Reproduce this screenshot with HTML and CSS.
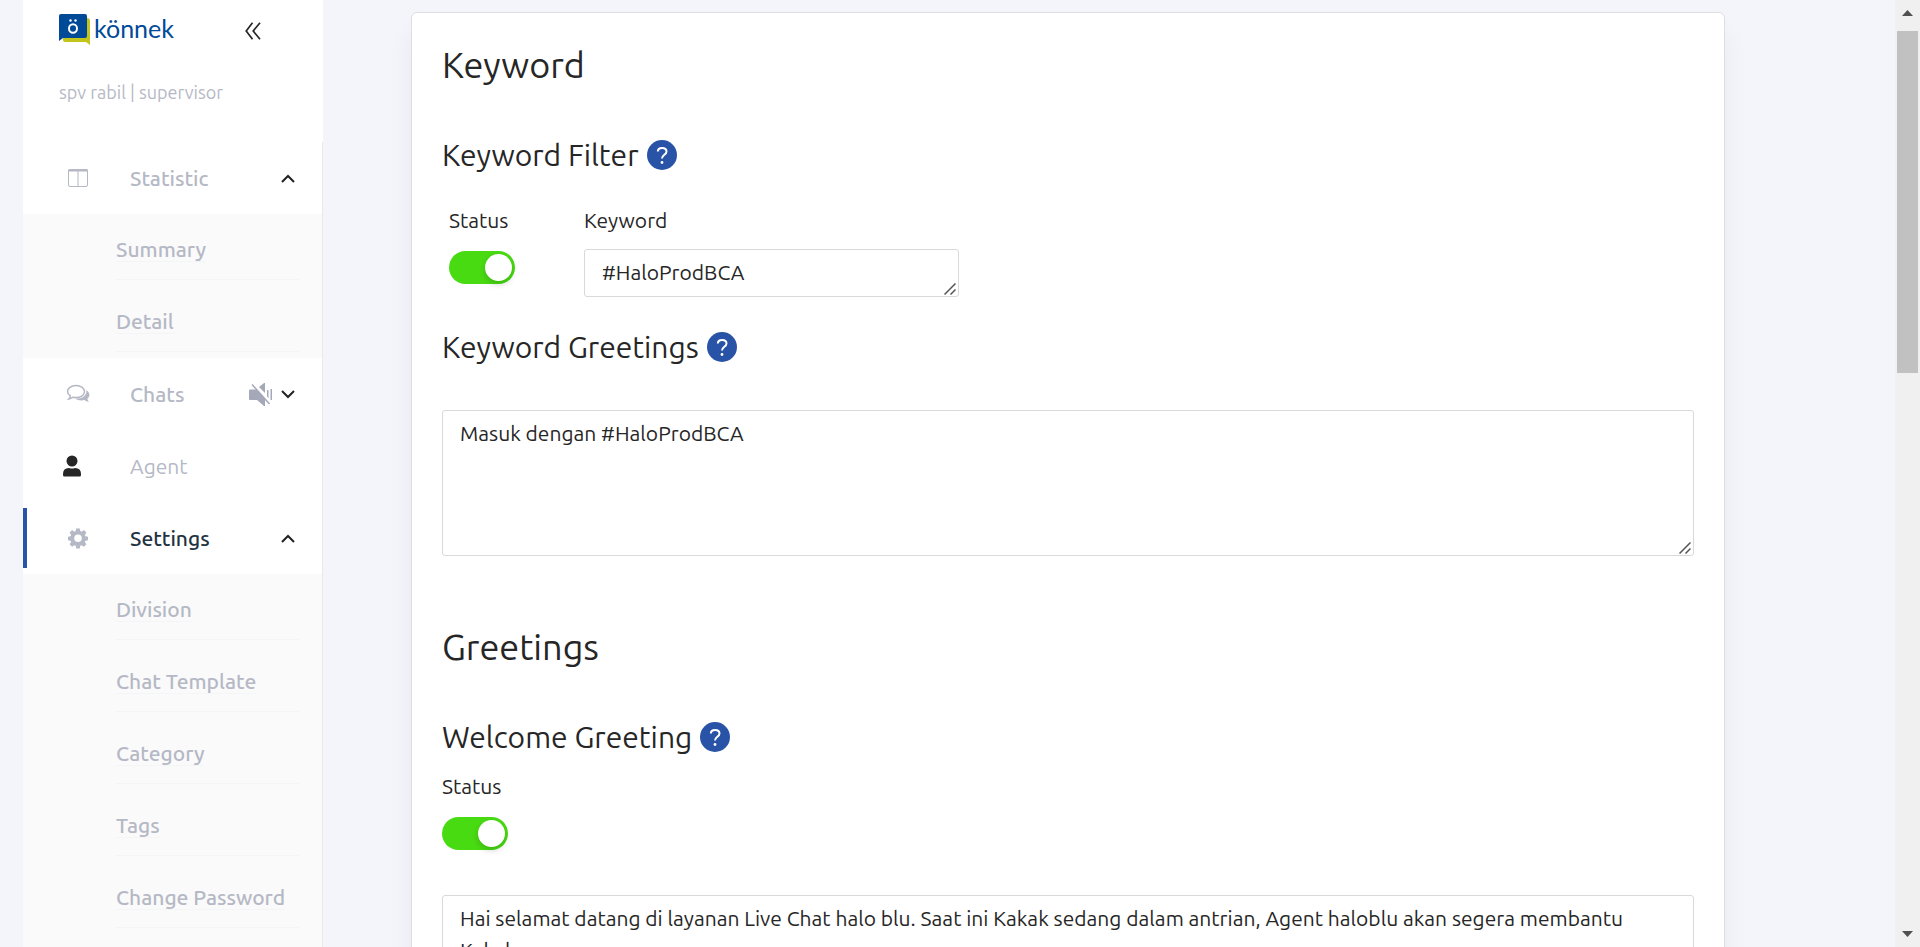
FILE: index.html
```html
<!DOCTYPE html>
<html lang="id">
<head>
<meta charset="utf-8">
<meta name="viewport" content="width=device-width, initial-scale=1">
<title>könnek - Settings</title>
<link rel="stylesheet" href="styles.css">
</head>
<body>
<div class="app">
  <aside class="sidebar">
    <header class="brand">
      <div class="brand-row">
        <a class="logo" href="#">
          <svg class="logo-mark" viewBox="0 0 32 31" aria-hidden="true">
            <path d="M6 4h22q3 0 3 3v24l-4-3H6q-2 0-2-2z" fill="#c3c51b"/>
            <path d="M2 0h24q2 0 2 2v20q0 2-2 2H4l-4 3V2q0-2 2-2z" fill="#004a98"/>
            <ellipse cx="14" cy="14.500" rx="4" ry="4.300" fill="none" stroke="#fff" stroke-width="2"/>
            <circle cx="11.500" cy="6.500" r="1.200" fill="#fff"/><circle cx="16.500" cy="6.500" r="1.200" fill="#fff"/>
          </svg>
          <span class="logo-text">könnek</span>
        </a>
        <button class="collapse" type="button" aria-label="Collapse menu">
          <svg viewBox="0 0 16 18"><path d="M7.500 .7 1.200 9l6.300 8.300M15 .7 8.200 9 15 17.300" fill="none" stroke="#262626" stroke-width="1.700"/></svg>
        </button>
      </div>
      <p class="user">spv rabil | supervisor</p>
    </header>
    <nav class="menu">
      <a class="item" href="#">
        <svg class="icon" viewBox="0 0 24 24"><rect x="2.500" y="3.500" width="19" height="17" rx="1.500" fill="none" stroke="#b5b8c5"/><path d="M2 3.500h20v2H2zM11.500 4h1v16h-1z" fill="#b5b8c5"/></svg>
        <span class="label">Statistic</span>
        <svg class="arrow" viewBox="0 0 14 9"><path d="M1 8l6-6 6 6" fill="none" stroke="#222" stroke-width="2"/></svg>
      </a>
      <div class="submenu">
        <a class="sub" href="#"><span>Summary</span></a>
        <a class="sub" href="#"><span>Detail</span></a>
      </div>
      <a class="item" href="#">
        <svg class="icon" viewBox="0 0 24 24"><path d="M10 3.600c5 0 8.500 2.600 8.500 6s-3.500 6-8.500 6q-1.500 0-3-.4-1.500 1.200-4 1.700 1.200-1.200 1.300-3C2.500 12.700 1.500 11.300 1.500 9.600c0-3.400 3.500-6 8.500-6z" fill="none" stroke="#b5b8c5" stroke-width="1.500"/><path d="M20.300 8q3.200 1.900 3.200 4.800 0 2.400-2.100 4 .2 1.700 1.500 3.200-2.800-.4-4.500-1.900-6 1-9.400-1.600 9.400.5 11.200-5.500.4-1.500.1-3z" fill="#b5b8c5"/></svg>
        <span class="label">Chats</span>
        <svg class="mute" viewBox="0 0 24 24"><path d="M1 7.500h6L16 16.500V24h-1l-7-6H1q-1 0-1-1V8.500q0-1 1-1zM15 1h1v10l-6-6zM18 8h1.500v8L18 14.500zM21.500 7H23v11h-1.500z" fill="#a5a8b8"/><path d="M3 2.500 20.500 22" stroke="#a5a8b8" stroke-width="1.500"/></svg>
        <svg class="arrow" viewBox="0 0 14 9"><path d="M1 1l6 6 6-6" fill="none" stroke="#222" stroke-width="2"/></svg>
      </a>
      <a class="item agent" href="#">
        <svg class="icon" viewBox="0 0 24 24"><circle cx="12" cy="7" r="5.500" fill="#262626"/><path d="M3 20q0-6 6-6 3 1 6 0 6 0 6 6v1q0 1.500-1.500 1.500h-15Q3 22.500 3 21z" fill="#262626"/></svg>
        <span class="label">Agent</span>
      </a>
      <a class="item active" href="#">
        <svg class="icon" viewBox="0 0 24 24"><path fill="#b5b8c5" fill-rule="evenodd" d="M10.200 2.500h3.600l.5 2.600 1.300.6 2.300-1.600 2.500 2.500-1.500 2.300.5 1.400 2.600.4v3.500l-2.600.5-.6 1.300 1.600 2.300-2.500 2.500-2.300-1.500-1.300.5-.5 2.700h-3.600l-.5-2.700-1.300-.5-2.300 1.500-2.500-2.500 1.600-2.300-.6-1.300-2.600-.5v-3.500l2.600-.4.500-1.400-1.500-2.300 2.500-2.500 2.300 1.600 1.300-.6zM12 8.400a3.800 3.800 0 1 0 0 7.600 3.800 3.800 0 0 0 0-7.600z"/></svg>
        <span class="label">Settings</span>
        <svg class="arrow" viewBox="0 0 14 9"><path d="M1 8l6-6 6 6" fill="none" stroke="#222" stroke-width="2"/></svg>
      </a>
      <div class="submenu">
        <a class="sub" href="#"><span>Division</span></a>
        <a class="sub" href="#"><span>Chat Template</span></a>
        <a class="sub" href="#"><span>Category</span></a>
        <a class="sub" href="#"><span>Tags</span></a>
        <a class="sub" href="#"><span>Change Password</span></a>
      </div>
    </nav>
  </aside>

  <main class="content">
    <section class="card">
      <h1 class="title">Keyword</h1>

      <h2 class="subtitle">Keyword Filter
        <button class="help" type="button" aria-label="Help"><svg viewBox="0 0 30 30"><path d="M10.800 11.500c.2-4.800 8.700-4.600 8.700 0 0 3.200-4.500 3.500-4.500 7" fill="none" stroke="#fff" stroke-width="2"/><circle cx="15" cy="22.500" r="1.400" fill="#fff"/></svg></button>
      </h2>
      <div class="filter">
        <div class="field">
          <label for="filter-status">Status</label>
          <input class="switch" id="filter-status" type="checkbox" role="switch" checked>
        </div>
        <div class="field field-keyword">
          <label for="keyword">Keyword</label>
          <div class="box"><textarea class="area one-line" id="keyword" rows="1">#HaloProdBCA</textarea><svg class="grip" viewBox="0 0 12 12"><path d="M.5 11.500l11-11M6.500 11.500l5-5" stroke="#555" stroke-width="1.500"/></svg></div>
        </div>
      </div>

      <h2 class="subtitle">Keyword Greetings
        <button class="help" type="button" aria-label="Help"><svg viewBox="0 0 30 30"><path d="M10.800 11.500c.2-4.800 8.700-4.600 8.700 0 0 3.200-4.500 3.500-4.500 7" fill="none" stroke="#fff" stroke-width="2"/><circle cx="15" cy="22.500" r="1.400" fill="#fff"/></svg></button>
      </h2>
      <div class="box message"><textarea class="area" rows="4" aria-label="Keyword Greetings">Masuk dengan #HaloProdBCA</textarea><svg class="grip" viewBox="0 0 12 12"><path d="M.5 11.500l11-11M6.500 11.500l5-5" stroke="#555" stroke-width="1.500"/></svg></div>

      <h1 class="title second">Greetings</h1>

      <h2 class="subtitle">Welcome Greeting
        <button class="help" type="button" aria-label="Help"><svg viewBox="0 0 30 30"><path d="M10.800 11.500c.2-4.800 8.700-4.600 8.700 0 0 3.200-4.500 3.500-4.500 7" fill="none" stroke="#fff" stroke-width="2"/><circle cx="15" cy="22.500" r="1.400" fill="#fff"/></svg></button>
      </h2>
      <div class="field welcome">
        <label for="welcome-status">Status</label>
        <input class="switch" id="welcome-status" type="checkbox" role="switch" checked>
      </div>
      <div class="box message"><textarea class="area" rows="4" aria-label="Welcome Greeting">Hai selamat datang di layanan Live Chat halo blu. Saat ini Kakak sedang dalam antrian, Agent haloblu akan segera membantu Kakak.</textarea></div>
    </section>
  </main>

  <div class="scrollbar" aria-hidden="true">
    <svg class="scroll-arrow" viewBox="0 0 11 6"><path d="M0 6l5.500-6L11 6z" fill="#505050"/></svg>
    <div class="track"><div class="thumb"></div></div>
    <svg class="scroll-arrow" viewBox="0 0 11 6"><path d="M0 0l5.500 6L11 0z" fill="#505050"/></svg>
  </div>
</div>
</body>
</html>
```
FILE: styles.css
```css
* { box-sizing: border-box; }

body {
  margin: 0;
  background: #f4f5fa;
  color: #262626;
  font-family: Ubuntu, "Noto Sans", sans-serif;
  font-size: 21px;
  line-height: 32px;
}

a { color: inherit; text-decoration: none; }
button { padding: 0; border: 0; background: none; font: inherit; cursor: pointer; }
svg { display: block; }

.app {
  display: flex;
  height: 100vh;
  padding-left: 23px;
  overflow: hidden;
}

/* Sidebar */
.sidebar {
  display: flex;
  flex: 0 0 300px;
  flex-direction: column;
  color: #b5b8c5;
}

.brand {
  flex: none;
  height: 142px;
  padding: 14px 62px 0 36px;
  background: #fff;
}
.brand-row {
  display: flex;
  align-items: flex-start;
  justify-content: space-between;
  height: 32px;
}
.logo { display: flex; gap: 3px; color: #004a98; }
.logo-mark { width: 32px; height: 31px; }
.logo-text { font-family: Lato, sans-serif; font-size: 25px; line-height: 28px; }
.collapse { padding-top: 8px; }
.collapse svg { width: 16px; height: 18px; }
.user { margin: 32px 0 0; font-size: 18px; line-height: 28px; }

.menu {
  display: flex;
  flex: 1;
  flex-direction: column;
  border-right: 1px solid #e8e8ee;
  background: #fff;
}
.item {
  display: flex;
  flex: none;
  align-items: center;
  height: 72px;
  padding: 0 27px 0 43px;
  font-weight: 500;
}
.icon { flex: none; width: 24px; height: 24px; margin-right: 40px; }
.label { flex: 1; }
.arrow { width: 14px; height: 9px; }
.mute { width: 24px; height: 24px; margin-right: 8px; }
.agent { padding-left: 37px; font-weight: 400; }
.agent .icon { margin-right: 46px; }
.active { color: #22333f; }
.active::before {
  content: "";
  width: 4px;
  height: 60px;
  margin: 0 39px 0 -43px;
  background: #2953a6;
}

.submenu { padding-left: 93px; background: #fafafa; }
.submenu:last-child { flex: 1; }
.submenu::after { content: ""; display: table; }
.sub {
  display: block;
  height: 66px;
  margin: 0 23px 6px 0;
  padding-top: 19px;
  border-bottom: 1px solid #f4f5f7;
  font-weight: 500;
}
.sub span { border-bottom: 1px solid #f4f5f7; }

/* Settings form */
.content { flex: 1; min-width: 0; padding: 12px 170px 0 88px; }
.card {
  padding: 30px;
  border: 1px solid #dedee2;
  border-radius: 6px;
  background: #fff;
  box-shadow: 0 20px 27px rgba(0, 0, 0, 0.05);
}
.title { margin: 0 0 44px; font-size: 36px; font-weight: 400; line-height: 44px; }
.title.second { margin-top: 69px; }
.subtitle {
  display: flex;
  align-items: center;
  gap: 8px;
  margin: 0;
  font-size: 30px;
  font-weight: 400;
  line-height: 48px;
}
.help { width: 30px; height: 30px; border-radius: 50%; background: #2953a6; }

.field { display: flex; flex-direction: column; align-items: flex-start; }
.filter { display: flex; gap: 69px; margin: 25px 0 26px; padding-left: 7px; }
.field-keyword label { margin-bottom: 13px; }
.welcome { margin-top: 9px; }

.switch {
  appearance: none;
  width: 66px;
  height: 33px;
  margin: 15px 0 0;
  padding: 3px;
  border-radius: 17px;
  background: #49db12;
  cursor: pointer;
}
.switch::before {
  content: "";
  display: block;
  width: 27px;
  height: 27px;
  margin-left: auto;
  border-radius: 50%;
  background: #fff;
  box-shadow: 0 3px 6px rgba(0, 35, 11, 0.2);
}
.switch:not(:checked) { background: #bfbfbf; }
.switch:not(:checked)::before { margin-left: 0; }

.box { position: relative; }
.message { margin-top: 39px; }
.welcome + .message { margin-top: 45px; }
.area {
  display: block;
  width: 100%;
  padding: 6px 17px 10px;
  border: 1px solid #d9d9d9;
  border-radius: 3px;
  background: #fff;
  color: inherit;
  font: inherit;
  resize: none;
  overflow: hidden;
}
.one-line { width: 375px; padding-bottom: 8px; }
.grip { position: absolute; right: 3px; bottom: 2px; width: 12px; height: 12px; pointer-events: none; }

/* Page scrollbar */
.scrollbar {
  display: flex;
  flex: 0 0 25px;
  flex-direction: column;
  align-items: center;
  padding: 10px 0;
  background: #f0f0f0;
}
.scroll-arrow { width: 11px; height: 6px; }
.track { flex: 1; padding-top: 15px; }
.thumb { width: 21px; height: 38%; background: #c1c1c1; }
```
